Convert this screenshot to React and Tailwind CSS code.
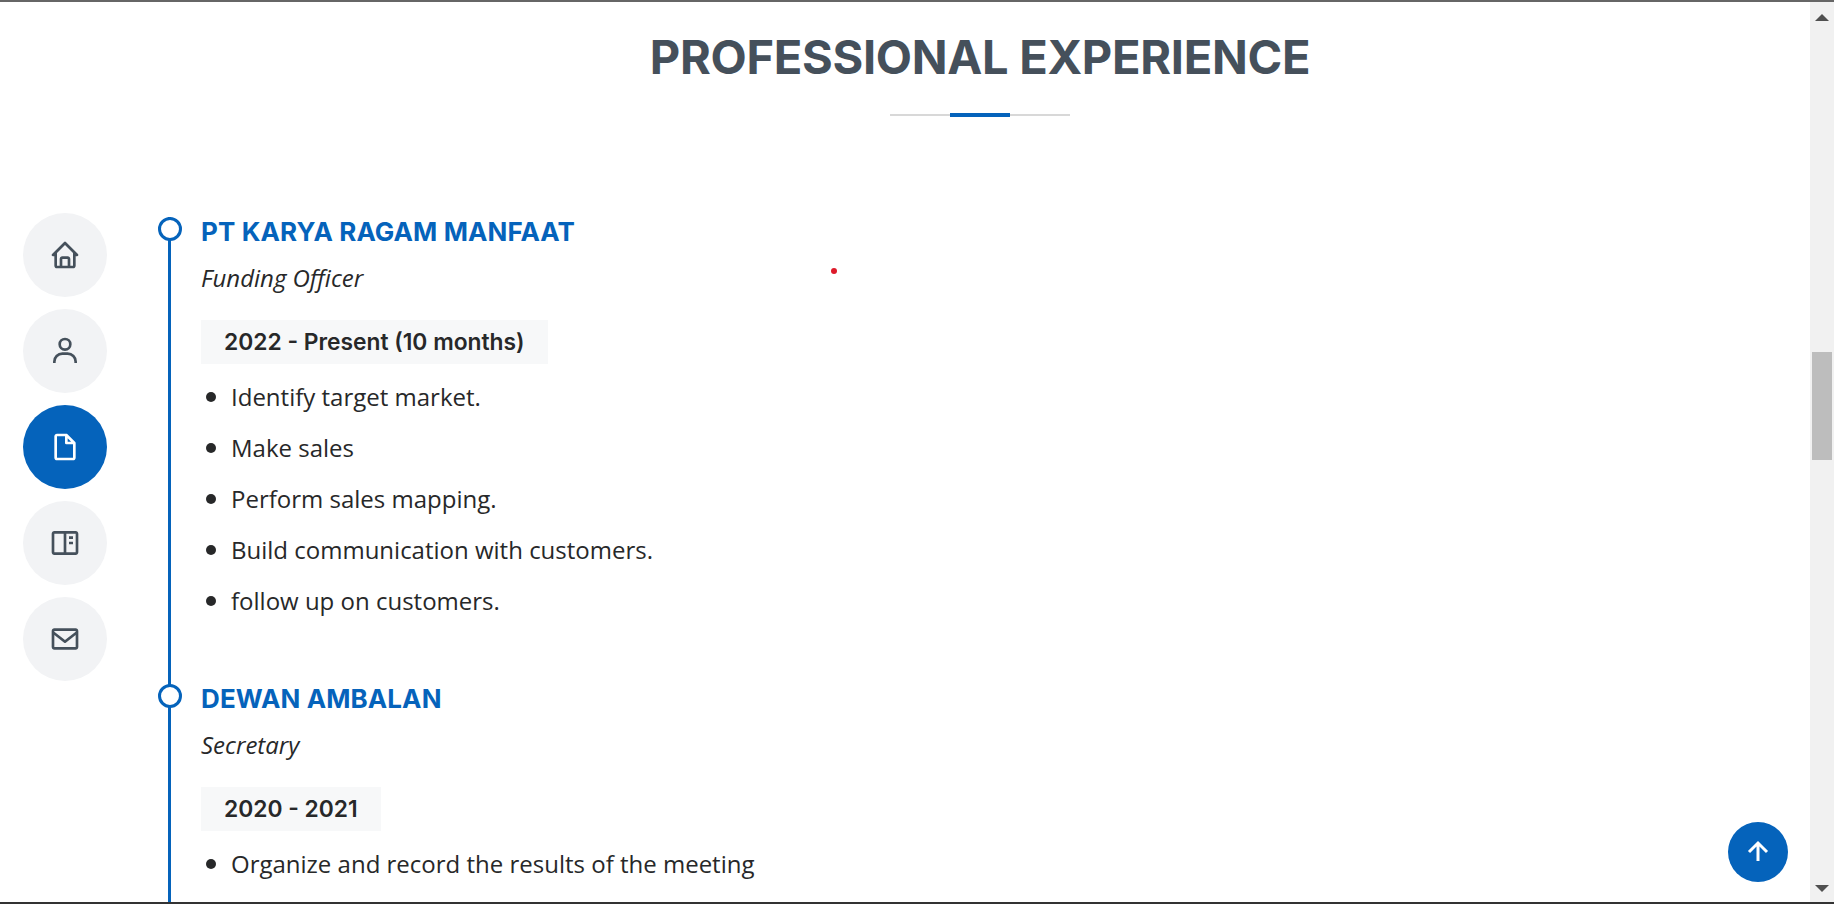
import { BiHome, BiUser, BiFileBlank, BiBookContent, BiEnvelope, BiUpArrowAlt } from 'react-icons/bi';

const navItems = [
  { icon: BiHome },
  { icon: BiUser },
  { icon: BiFileBlank, active: true },
  { icon: BiBookContent },
  { icon: BiEnvelope },
];

const jobs = [
  {
    company: 'PT KARYA RAGAM MANFAAT',
    role: 'Funding Officer',
    period: '2022 - Present (10 months)',
    tasks: [
      'Identify target market.',
      'Make sales',
      'Perform sales mapping.',
      'Build communication with customers.',
      'follow up on customers.',
    ],
  },
  {
    company: 'DEWAN AMBALAN',
    role: 'Secretary',
    period: '2020 - 2021',
    tasks: ['Organize and record the results of the meeting'],
  },
];

/* ---- Side nav ---- */
function NavButton({ icon: Icon, active }) {
  return (
    <div className={`w-[84px] h-[84px] rounded-full flex items-center justify-center ${active ? 'bg-[#0563bb] text-white' : 'bg-[#f2f3f5] text-[#45505b]'}`}>
      <Icon className="w-[32px] h-[32px]" />
    </div>
  );
}

/* ---- Timeline item ---- */
function Job({ company, role, period, tasks }) {
  return (
    <div className="relative border-l-[3px] border-[#0563bb] pl-[30px] pb-[62px]">
      <div className="absolute left-[-13.5px] top-0 w-6 h-6 rounded-full bg-white border-[3px] border-[#0563bb]" />
      <h4 className="font-['Inter',sans-serif] font-bold text-[26px] leading-[30px] -mt-[4px] text-[#0563bb] tracking-[0.1px]">{company}</h4>
      <p className="italic text-[24px] leading-[32px] mt-[15px] text-[#272829]">{role}</p>
      <div className="mt-[26px] w-fit bg-[#f7f8f9] px-[23px] h-[44px] leading-[44px] font-['Inter',sans-serif] font-semibold text-[22.8px] text-[#272829]">{period}</div>
      <ul className="mt-[7px]">
        {tasks.map((t) => (
          <li key={t} className="flex items-center h-[51px] text-[24px] text-[#272829]">
            <span className="w-[10px] h-[10px] rounded-full bg-[#272829] ml-[5px] mr-[15px] shrink-0" />
            {t}
          </li>
        ))}
      </ul>
    </div>
  );
}

export default function App() {
  return (
    <div className="relative h-screen flex flex-col overflow-hidden bg-white font-['Open_Sans',sans-serif]">
      <div className="h-[2px] bg-[#666666] shrink-0" />
      <div className="flex-1 min-h-0 flex">
        {/* Nav */}
        <aside className="w-[150px] shrink-0 pl-[23px] pt-[211px] flex flex-col gap-3">
          {navItems.map((n, i) => (
            <NavButton key={i} icon={n.icon} active={n.active} />
          ))}
        </aside>

        {/* Main */}
        <main className="flex-1 min-w-0 overflow-hidden relative">
          <div className="text-center pt-[25px]">
            <h2 className="font-['Inter',sans-serif] font-bold text-[47px] leading-[60px] text-[#45505b] tracking-[-0.3px]">PROFESSIONAL EXPERIENCE</h2>
            <div className="relative mt-[27px] mx-auto w-[180px] h-[2px] bg-[#d8d8d8]">
              <div className="absolute left-[60px] -top-[1px] w-[60px] h-1 bg-[#0563bb]" />
            </div>
          </div>
          <div className="mt-[105px] ml-[18px]">
            {jobs.map((j) => (
              <Job key={j.company} {...j} />
            ))}
          </div>
          {/* little red dot from the page */}
          <div className="absolute left-[681px] top-[266px] w-[6px] h-[6px] rounded-full bg-[#dd1a2a]" />
        </main>

        {/* Scrollbar */}
        <div className="w-[24px] shrink-0 bg-[#f1f1f1] flex flex-col items-center justify-between">
          <div className="mt-[12px] w-0 h-0 border-x-[7px] border-x-transparent border-b-[7px] border-b-[#505050]" />
          <div className="absolute top-[352px] w-[20px] h-[108px] bg-[#bdbdbd]" />
          <div className="mb-[10px] w-0 h-0 border-x-[7px] border-x-transparent border-t-[7px] border-t-[#505050]" />
        </div>
      </div>
      <div className="h-[2px] bg-[#333333] shrink-0" />

      {/* Back to top */}
      <div className="absolute left-[1728px] top-[822px] w-[60px] h-[60px] rounded-full bg-[#0563bb] flex items-center justify-center text-white">
        <BiUpArrowAlt className="w-[36px] h-[36px]" />
      </div>
    </div>
  );
}
